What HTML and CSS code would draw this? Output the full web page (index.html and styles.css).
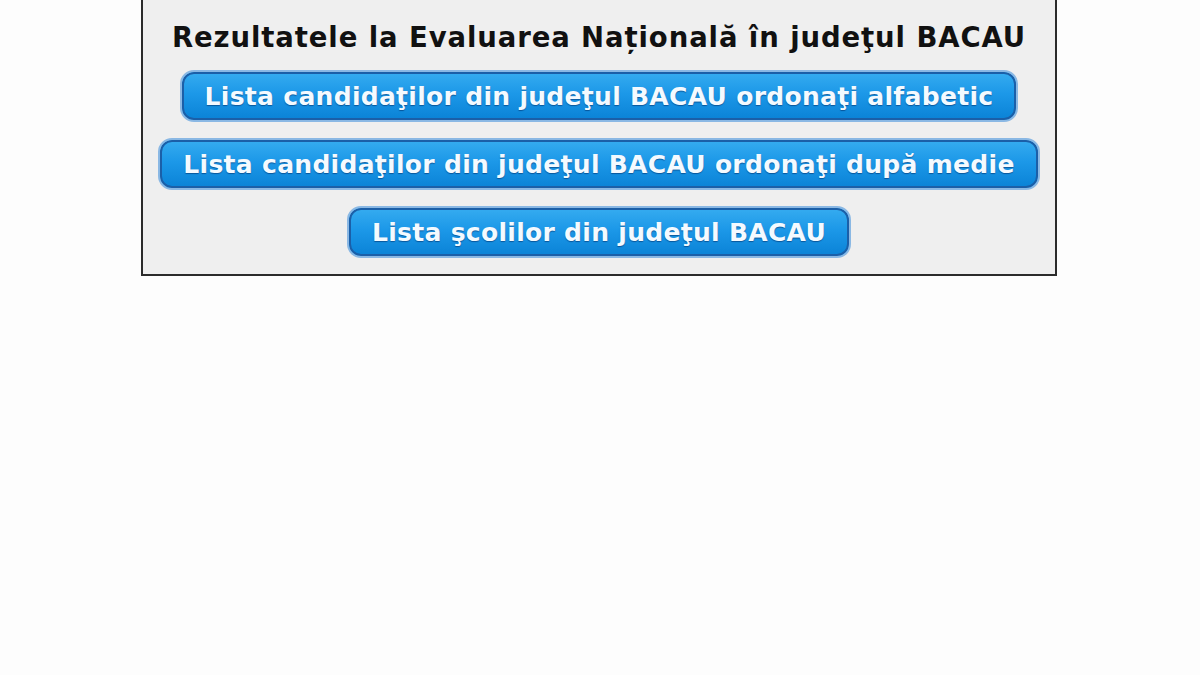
FILE: index.html
```html
<!DOCTYPE html>
<html lang="ro">
<head>
<meta charset="utf-8">
<title>Rezultatele la Evaluarea Națională în judeţul BACAU</title>
<link rel="stylesheet" href="styles.css">
</head>
<body>
<div class="panel">
  <h1 class="panel-title">Rezultatele la Evaluarea Națională în judeţul BACAU</h1>
  <a class="btn" href="#">Lista candidaţilor din judeţul BACAU ordonaţi alfabetic</a>
  <a class="btn" href="#">Lista candidaţilor din judeţul BACAU ordonaţi după medie</a>
  <a class="btn" href="#">Lista şcolilor din judeţul BACAU</a>
</div>
</body>
</html>
```
FILE: styles.css
```css
html, body {
  margin: 0;
  padding: 0;
  background: #fdfdfd;
}

body {
  font-family: "DejaVu Sans", Verdana, sans-serif;
}

.panel {
  box-sizing: border-box;
  width: 916px;
  margin-left: 141px;
  background: #efefef;
  border: 2px solid #2b2b2b;
  border-top: none;
  padding: 20px 0 16px;
  display: flex;
  flex-direction: column;
  align-items: center;
  gap: 16px;
}

.panel-title {
  margin: 0;
  font-size: 27.5px;
  font-weight: bold;
  color: #111;
  line-height: 34px;
  letter-spacing: 0.9px;
}

.btn {
  box-sizing: border-box;
  height: 52px;
  padding: 0 23px;
  display: flex;
  align-items: center;
  border-radius: 14px;
  border: 2px solid #8ab8e4;
  box-shadow: inset 0 0 0 2px #1b5fa8;
  background: linear-gradient(to bottom, #36acf0 0%, #1c98e8 45%, #0a82d6 100%);
  color: #f4faff;
  font-size: 25px;
  font-weight: bold;
  letter-spacing: 0.3px;
  text-decoration: none;
  text-shadow: 0 1px 1px rgba(0, 50, 110, 0.6);
}
```
